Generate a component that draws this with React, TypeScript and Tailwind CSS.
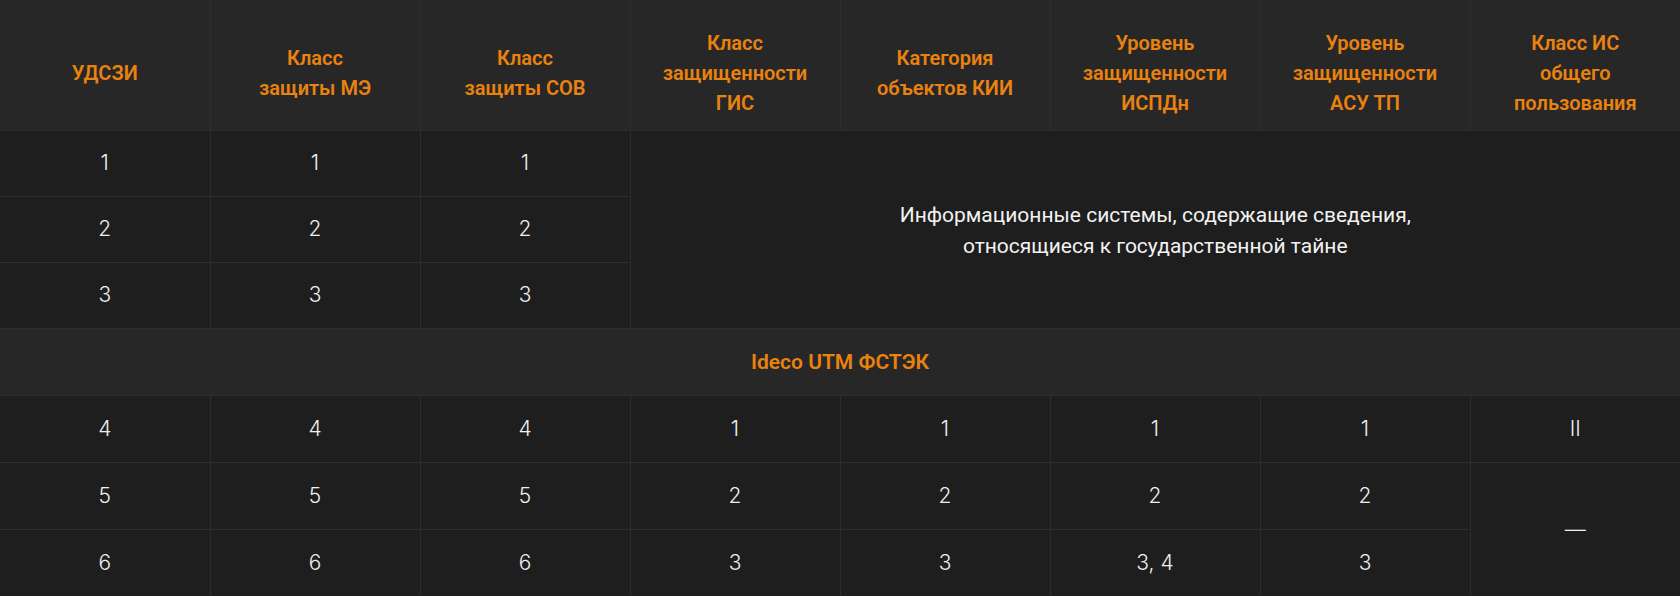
const headers = [
  ['УДСЗИ'],
  ['Класс', 'защиты МЭ'],
  ['Класс', 'защиты СОВ'],
  ['Класс', 'защищенности', 'ГИС'],
  ['Категория', 'объектов КИИ'],
  ['Уровень', 'защищенности', 'ИСПДн'],
  ['Уровень', 'защищенности', 'АСУ ТП'],
  ['Класс ИС', 'общего', 'пользования'],
];

const num = "h-[66px] border-r border-b border-[#2d2d2d] text-center align-middle text-[21px] font-light text-[#efefef] [font-family:Inter,'Noto_Sans',sans-serif]";
const numLast = "h-[67px] border-r border-b border-[#2d2d2d] text-center align-middle text-[21px] font-light text-[#efefef] [font-family:Inter,'Noto_Sans',sans-serif]";

export default function App() {
  return (
    <div className="w-[1680px] h-[596px] bg-[#1e1e1e] overflow-hidden [font-family:Roboto,'Liberation_Sans',sans-serif]">
      <table className="w-[1680px] table-fixed border-collapse">
        <colgroup>
          {headers.map((_, i) => (
            <col key={i} className="w-[210px]" />
          ))}
        </colgroup>
        <thead>
          <tr className="bg-[#272727]">
            {headers.map((h, i) => (
              <th
                key={i}
                className="h-[130px] pt-[16px] border-r border-b border-[#2d2d2d] last:border-r-0 text-center align-middle text-[20px] leading-[30px] font-semibold text-[#ea820f]"
              >
                {h.map((line, j) => (
                  <div key={j}>{line}</div>
                ))}
              </th>
            ))}
          </tr>
        </thead>
        <tbody>
          {[1, 2, 3].map((n) => (
            <tr key={n}>
              <td className={num}>{n}</td>
              <td className={num}>{n}</td>
              <td className={num}>{n}</td>
              {n === 1 && (
                <td
                  colSpan={5}
                  rowSpan={3}
                  className="pt-[4px] border-b border-[#2d2d2d] text-center align-middle text-[21px] leading-[31px] text-[#f2f2f2]"
                >
                  <div>Информационные системы, содержащие сведения,</div>
                  <div>относящиеся к государственной тайне</div>
                </td>
              )}
            </tr>
          ))}
          <tr className="bg-[#272727]">
            <td
              colSpan={8}
              className="h-[67px] pt-[3px] border-b border-[#2d2d2d] text-center align-middle text-[21px] font-semibold text-[#ea820f]"
            >
              Ideco UTM ФСТЭК
            </td>
          </tr>
          <tr>
            <td className={numLast}>4</td>
            <td className={numLast}>4</td>
            <td className={numLast}>4</td>
            <td className={numLast}>1</td>
            <td className={numLast}>1</td>
            <td className={numLast}>1</td>
            <td className={numLast}>1</td>
            <td className="h-[67px] border-b border-[#2d2d2d] text-center align-middle text-[21px] font-light text-[#efefef] [font-family:Inter,'Noto_Sans',sans-serif]">
              II
            </td>
          </tr>
          <tr>
            <td className={numLast}>5</td>
            <td className={numLast}>5</td>
            <td className={numLast}>5</td>
            <td className={numLast}>2</td>
            <td className={numLast}>2</td>
            <td className={numLast}>2</td>
            <td className={numLast}>2</td>
            <td
              rowSpan={2}
              className="text-center align-middle text-[21px] font-light text-[#efefef] [font-family:Inter,'Noto_Sans',sans-serif]"
            >
              —
            </td>
          </tr>
          <tr>
            <td className={numLast}>6</td>
            <td className={numLast}>6</td>
            <td className={numLast}>6</td>
            <td className={numLast}>3</td>
            <td className={numLast}>3</td>
            <td className={numLast}>3, 4</td>
            <td className={numLast}>3</td>
          </tr>
        </tbody>
      </table>
    </div>
  );
}
